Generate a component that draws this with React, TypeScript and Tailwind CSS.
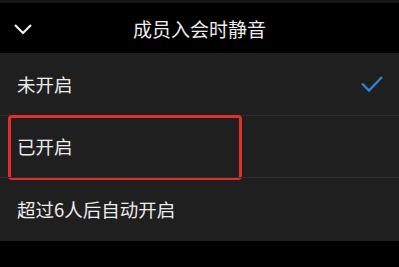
import * as React from "react";

type Option = {
  label: string;
  selected?: boolean;
  highlighted?: boolean;
};

const options: Option[] = [
  { label: "未开启", selected: true },
  { label: "已开启", highlighted: true },
  { label: "超过6人后自动开启" },
];

export default function App() {
  return (
    <div
      className="flex h-[267px] w-[399px] flex-col bg-black text-white"
      style={{ fontFamily: '"Noto Sans CJK SC", "Noto Sans", sans-serif' }}
    >
      <div className="h-[3px] bg-[#161616]" />

      {/* header */}
      <div className="relative flex h-[50px] items-center justify-center">
        <svg
          className="absolute left-[13px] top-[20px]"
          width="20"
          height="13"
          viewBox="0 0 20 13"
          fill="none"
        >
          <path d="M2 2l8 8 8-8" stroke="#f2f2f2" strokeWidth="2.2" />
        </svg>
        <span className="text-[19px] leading-none text-[#ededed]">成员入会时静音</span>
      </div>

      {/* options */}
      <ul className="flex flex-col bg-[#1f1f1f]">
        {options.map((o, i) => (
          <li
            key={o.label}
            className={[
              "relative flex items-center pl-[17px] pr-[15px]",
              i === 2 ? "h-[64px]" : "h-[62px]",
              i > 0 ? "border-t border-[#2c2c2c]" : "",
            ].join(" ")}
          >
            <span className="flex-1 text-[18.5px] leading-none text-[#ececec]">{o.label}</span>
            {o.selected && (
              <svg width="24" height="18" viewBox="0 0 24 18" fill="none">
                <path d="M2 8.5l7 7L22 2" stroke="#2f80d6" strokeWidth="2.4" />
              </svg>
            )}
            {o.highlighted && (
              <div className="pointer-events-none absolute left-[8px] top-[-1px] h-[65px] w-[234px] rounded-[4px] border-[3px] border-[#e0302a]" />
            )}
          </li>
        ))}
      </ul>
    </div>
  );
}
